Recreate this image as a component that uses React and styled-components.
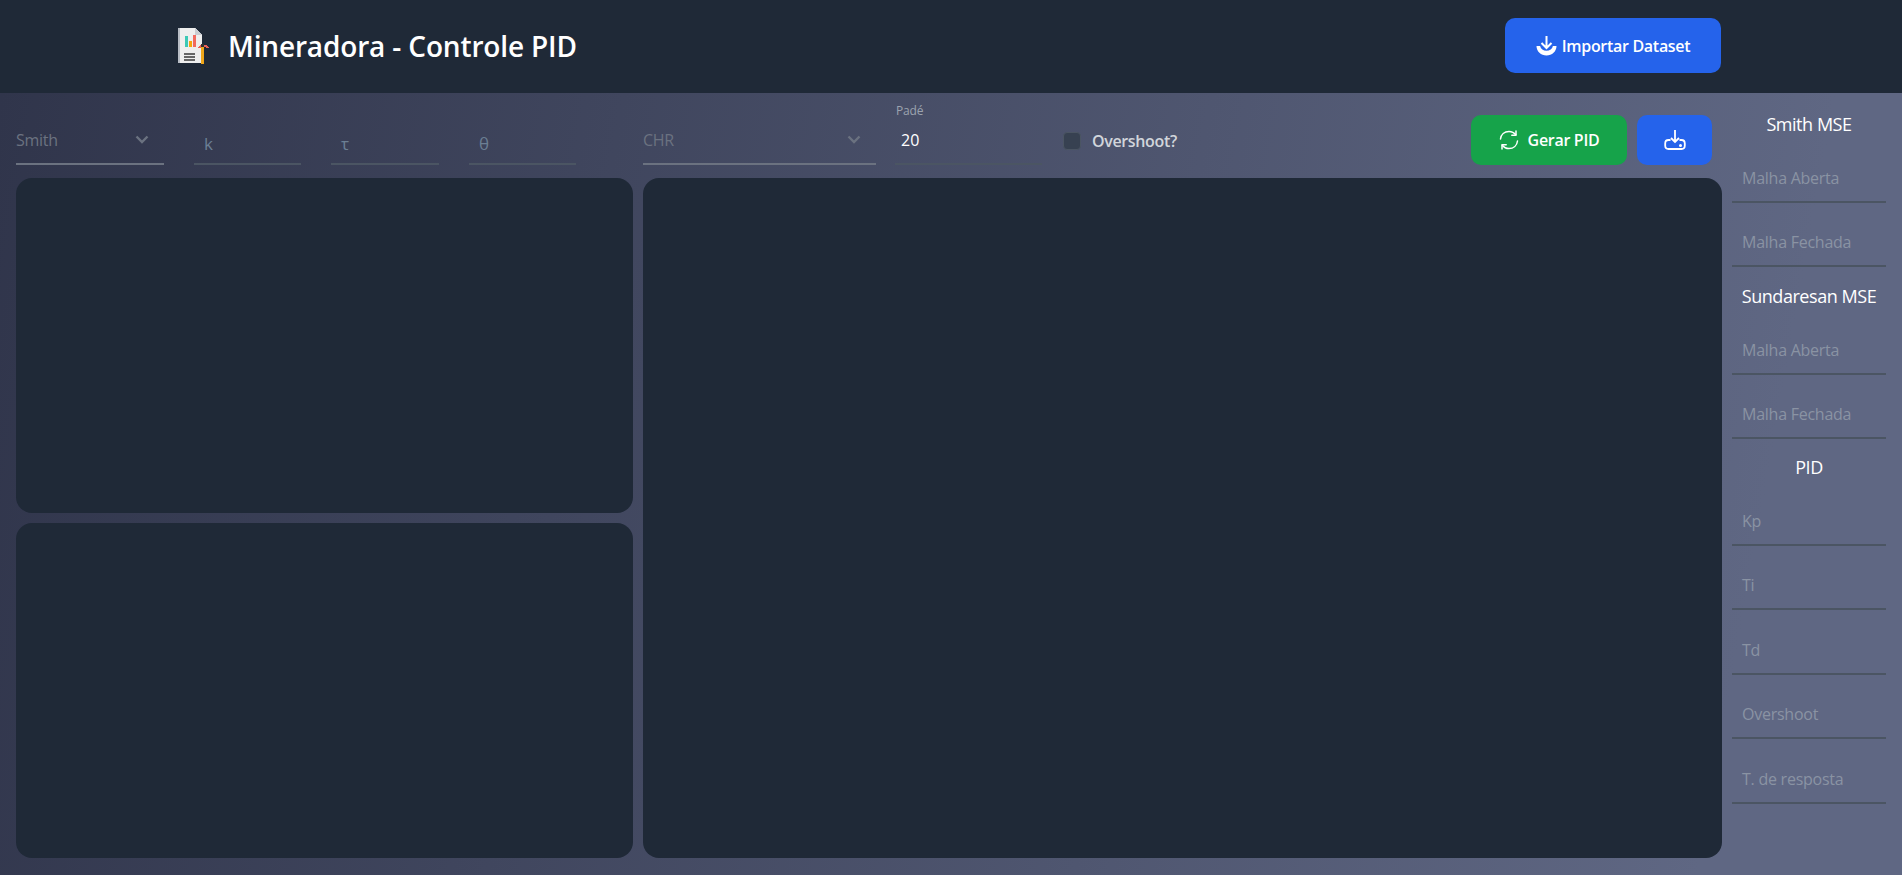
import React from "react";
import styled, { createGlobalStyle } from "styled-components";

const Global = createGlobalStyle`
  html, body { margin: 0; padding: 0; }
  body { font-family: "Open Sans", "Noto Sans", sans-serif; background: #1f2937; }
  * { box-sizing: border-box; }
`;

const Page = styled.div`
  width: 1902px;
  height: 875px;
  display: flex;
  flex-direction: column;
  overflow: hidden;
`;

const Header = styled.header`
  height: 93px;
  flex: none;
  background: #1f2937;
  display: flex;
  align-items: center;
  padding: 0 181px 2px 177px;
`;

const Brand = styled.div`
  display: flex;
  align-items: center;
  gap: 18px;
  flex: 1;
`;

const Title = styled.h1`
  margin: 0;
  font-size: 28px;
  font-weight: 600;
  color: #fff;
  letter-spacing: -0.15px;
`;

const BaseButton = styled.button`
  border: 0;
  border-radius: 10px;
  color: #fff;
  font-family: inherit;
  font-weight: 600;
  display: flex;
  align-items: center;
  justify-content: center;
`;

const ImportButton = styled(BaseButton)`
  width: 216px;
  height: 55px;
  background: #2563eb;
  font-size: 16px;
  gap: 5px;
  letter-spacing: -0.3px;
`;

const Body = styled.div`
  flex: 1;
  display: flex;
  gap: 10px;
  padding: 0 16px 17px;
  background: linear-gradient(100deg, #30354b 0%, #5f6783 90%);
`;

const Main = styled.main`
  width: 1706px;
  display: flex;
  flex-direction: column;
`;

const Toolbar = styled.div`
  height: 72px;
  margin-bottom: 13px;
  display: flex;
  align-items: flex-end;
  padding-right: 10px;
`;

const SelectBox = styled.div`
  width: ${(p) => p.$w}px;
  height: 44px;
  margin-right: ${(p) => p.$mr}px;
  border-bottom: 2px solid #6b7280;
  display: flex;
  align-items: center;
  justify-content: space-between;
  padding: 0 14px 4px 0;
  color: #6b7280;
  font-size: 16px;
  letter-spacing: -0.3px;
`;

const ParamInput = styled.div`
  width: ${(p) => p.$w}px;
  height: 40px;
  margin-right: 30px;
  border-bottom: 2px solid #4b5563;
  padding: 0 10px 2px;
  display: flex;
  align-items: center;
  color: #6b7f94;
  font-size: 17px;
`;

const PadeField = styled.div`
  position: relative;
  width: 147px;
  height: 44px;
  margin: 0 21px 0 19px;
  border-bottom: 2px solid #4b5563;
  padding: 0 6px 4px;
  display: flex;
  align-items: center;
  color: #fff;
  font-size: 16px;
`;

const PadeLabel = styled.span`
  position: absolute;
  left: 1px;
  top: -19px;
  font-size: 12px;
  color: #9ca3af;
  letter-spacing: -0.2px;
`;

const CheckRow = styled.label`
  height: 44px;
  padding-bottom: 5px;
  display: flex;
  align-items: center;
  gap: 11px;
  font-size: 16px;
  font-weight: 600;
  color: #d1d5db;
  letter-spacing: -0.35px;
`;

const Check = styled.span`
  width: 18px;
  height: 18px;
  border-radius: 4px;
  background: #374151;
  border: 1px solid #4b5563;
`;

const Actions = styled.div`
  margin-left: auto;
  display: flex;
  gap: 10px;
`;

const GenerateButton = styled(BaseButton)`
  width: 156px;
  height: 50px;
  background: #16a34a;
  font-size: 16px;
  gap: 9px;
  letter-spacing: -0.3px;
`;

const SaveButton = styled(BaseButton)`
  width: 75px;
  height: 50px;
  background: #2563eb;
`;

const Panels = styled.div`
  flex: 1;
  display: grid;
  grid-template-columns: 617px 1fr;
  gap: 10px;
`;

const LeftStack = styled.div`
  display: grid;
  grid-template-rows: 1fr 1fr;
  gap: 10px;
`;

const Panel = styled.section`
  background: #1f2937;
  border-radius: 16px;
`;

const Side = styled.aside`
  width: 154px;
  padding-top: 17px;
  display: flex;
  flex-direction: column;
`;

const SideHeading = styled.h2`
  margin: ${(p) => p.$mt}px 0 0;
  height: 28px;
  line-height: 28px;
  font-size: 18px;
  font-weight: 400;
  color: #fff;
  text-align: center;
  white-space: nowrap;
  letter-spacing: -0.45px;
`;

const SideInput = styled.div`
  height: 64.5px;
  border-bottom: 2px solid #4b5563;
  padding: 0 10px 12px;
  display: flex;
  align-items: flex-end;
  font-size: 16px;
  color: #8a93a3;
  white-space: nowrap;
  letter-spacing: -0.25px;
`;

const Chevron = () => (
  <svg width="16" height="16" viewBox="0 0 16 16" fill="none" stroke="#6b7280" strokeWidth="2.4">
    <path d="M2.5 4.5 8 10l5.5-5.5" />
  </svg>
);

const ReportLogo = () => (
  <svg width="33" height="37" viewBox="0 0 33 37" shapeRendering="crispEdges">
    <path d="M1 1h17l7 7v28H1z" fill="#eeeeee" />
    <path d="M1 1h2v35H1z" fill="#b9bec6" />
    <path d="M18 1l7 7h-7z" fill="#c9cdd2" />
    <rect x="8" y="9" width="3" height="11" fill="#3cc9b5" />
    <rect x="12" y="14" width="3" height="6" fill="#f5a60f" />
    <rect x="16" y="8" width="3" height="12" fill="#f26a5e" />
    <rect x="7" y="26" width="11" height="1.5" fill="#666" />
    <rect x="7" y="29" width="11" height="1.5" fill="#666" />
    <rect x="7" y="32" width="11" height="1.5" fill="#666" />
    <path d="M20 21l4-3h5l4 3h-4l-1-1h-3l-1 1z" fill="#e9615a" />
    <rect x="24" y="17" width="3" height="20" fill="#f0a71a" />
    <rect x="24" y="17" width="3" height="3" fill="#333" />
  </svg>
);

const ImportIcon = () => (
  <svg width="21" height="21" viewBox="0 0 21 21" fill="none">
    <path d="M10.5 1v12M5.5 8l5 5 5-5" stroke="#fff" strokeWidth="2" />
    <path d="M0.5 11h3.6c.6 3 3.2 4.8 6.4 4.8s5.800-1.800 6.400-4.800h3.600c0 5.500-4.500 9.500-10 9.500s-10-4-10-9.500z" fill="#fff" />
  </svg>
);

const RefreshIcon = () => (
  <svg width="20" height="20" viewBox="0 0 20 20" fill="none" stroke="#fff" strokeWidth="1.500" strokeLinecap="round" strokeLinejoin="round">
    <path d="M1.500 9C2 4.500 5.500 1.500 10 1.500c2.800 0 5.200 1.300 6.700 3.300" />
    <path d="M18.500 11c-.5 4.500-4 7.500-8.500 7.500-2.800 0-5.200-1.300-6.700-3.300" />
    <path d="M17 1v4.200h-4.200M3 19v-4.200h4.200" />
  </svg>
);

const TrayIcon = () => (
  <svg width="22" height="22" viewBox="0 0 22 22" fill="none" stroke="#fff" strokeWidth="1.800">
    <path d="M11 1v12M7 9l4 4 4-4" />
    <path d="M6.500 11H4.500C2.500 11 1.200 12.500 1.200 14.500v2c0 2 1.200 3.500 3.300 3.500h13c2.100 0 3.300-1.500 3.300-3.500v-2c0-2-1.300-3.500-3.300-3.500h-2" />
    <circle cx="16.500" cy="16.500" r=".6" fill="#fff" />
  </svg>
);

const params = [
  { label: "k", w: 107 },
  { label: "τ", w: 108 },
  { label: "θ", w: 107 },
];

const sideGroups = [
  { title: "Smith MSE", mt: 0, fields: ["Malha Aberta", "Malha Fechada"] },
  { title: "Sundaresan MSE", mt: 15, fields: ["Malha Aberta", "Malha Fechada"] },
  { title: "PID", mt: 14, fields: ["Kp", "Ti", "Td", "Overshoot", "T. de resposta"] },
];

export default function App() {
  return (
    <Page>
      <Global />
      <Header>
        <Brand>
          <ReportLogo />
          <Title>Mineradora - Controle PID</Title>
        </Brand>
        <ImportButton>
          <ImportIcon />
          Importar Dataset
        </ImportButton>
      </Header>
      <Body>
        <Main>
          <Toolbar>
            <SelectBox $w={148} $mr={30}>
              Smith
              <Chevron />
            </SelectBox>
            {params.map((p) => (
              <ParamInput key={p.label} $w={p.w}>
                {p.label}
              </ParamInput>
            ))}
            <SelectBox $w={233} $mr={0} style={{ marginLeft: 37 }}>
              CHR
              <Chevron />
            </SelectBox>
            <PadeField>
              <PadeLabel>Padé</PadeLabel>
              20
            </PadeField>
            <CheckRow>
              <Check />
              Overshoot?
            </CheckRow>
            <Actions>
              <GenerateButton>
                <RefreshIcon />
                Gerar PID
              </GenerateButton>
              <SaveButton>
                <TrayIcon />
              </SaveButton>
            </Actions>
          </Toolbar>
          <Panels>
            <LeftStack>
              <Panel />
              <Panel />
            </LeftStack>
            <Panel />
          </Panels>
        </Main>
        <Side>
          {sideGroups.map((g) => (
            <React.Fragment key={g.title}>
              <SideHeading $mt={g.mt}>{g.title}</SideHeading>
              {g.fields.map((f) => (
                <SideInput key={f}>{f}</SideInput>
              ))}
            </React.Fragment>
          ))}
        </Side>
      </Body>
    </Page>
  );
}
